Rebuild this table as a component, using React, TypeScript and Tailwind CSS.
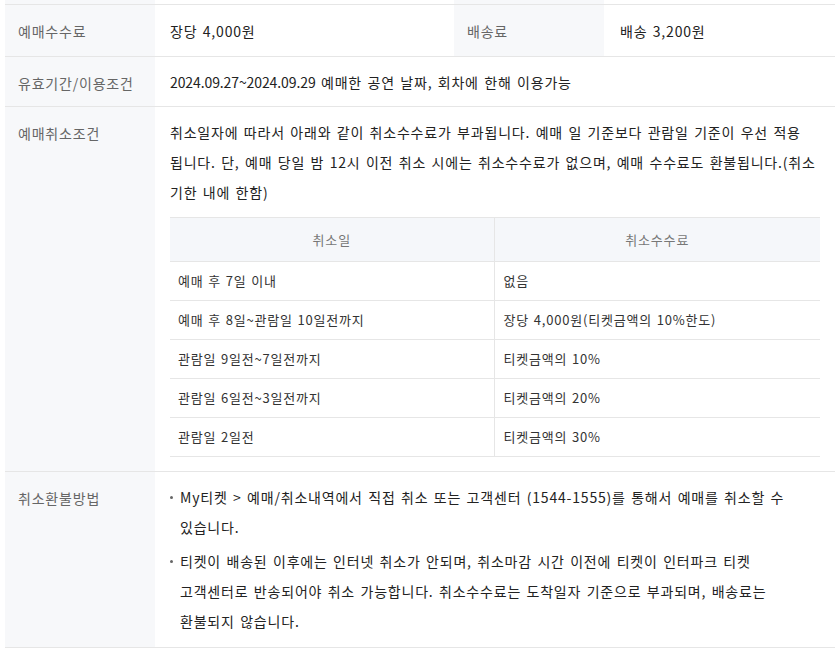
const rows = [
  ["예매 후 7일 이내", "없음"],
  ["예매 후 8일~관람일 10일전까지", "장당 4,000원(티켓금액의 10%한도)"],
  ["관람일 9일전~7일전까지", "티켓금액의 10%"],
  ["관람일 6일전~3일전까지", "티켓금액의 20%"],
  ["관람일 2일전", "티켓금액의 30%"],
];

function Label({ children }: { children: React.ReactNode }) {
  return (
    <div className="bg-[#f7f8fa] px-[13px] pt-[16px] text-[14px] leading-[20px] tracking-[0.8px] text-[#666]">
      {children}
    </div>
  );
}

export default function App() {
  return (
    <div
      className="min-h-[651px] bg-white text-[#222] break-keep tracking-[0.8px] [word-spacing:1.5px]"
      style={{ fontFamily: '"Noto Sans CJK KR", "Noto Sans", sans-serif' }}
    >
      <div className="ml-[5px] w-[830px]">
        <div className="grid h-[5px] grid-cols-[150px_299px_150px_1fr] border-b border-[#e6e6e6]">
          <div className="bg-[#f7f8fa]" />
          <div />
          <div className="bg-[#f7f8fa]" />
          <div />
        </div>

        <div className="grid h-[52px] grid-cols-[150px_299px_150px_1fr] border-b border-[#e6e6e6]">
          <Label>예매수수료</Label>
          <div className="px-[15px] pt-[16px] text-[14px] leading-[20px]">장당 4,000원</div>
          <Label>배송료</Label>
          <div className="px-[16px] pt-[16px] text-[14px] leading-[20px]">배송 3,200원</div>
        </div>

        <div className="grid h-[50px] grid-cols-[150px_1fr] border-b border-[#e6e6e6]">
          <Label>유효기간/이용조건</Label>
          <div className="px-[15px] pt-[15px] text-[14px] leading-[20px]">
            <span className="tracking-[-0.1px]">2024.09.27~2024.09.29</span> 예매한 공연 날짜, 회차에 한해 이용가능
          </div>
        </div>

        <div className="grid grid-cols-[150px_1fr] border-b border-[#e6e6e6]">
          <Label>예매취소조건</Label>
          <div className="px-[15px] pt-[10px] pb-[14px]">
            <p className="text-[14px] leading-[30px]">
              취소일자에 따라서 아래와 같이 취소수수료가 부과됩니다. 예매 일 기준보다 관람일 기준이 우선 적용
              됩니다. 단, 예매 당일 밤 12시 이전 취소 시에는 취소수수료가 없으며, 예매 수수료도 환불됩니다.(취소
              기한 내에 한함)
            </p>
            <table className="mt-[10px] w-full border-collapse text-[13px] tracking-[0.8px] text-[#333] [word-spacing:1px]">
              <thead>
                <tr className="h-[44px] bg-[#f5f7fa] text-[#777]">
                  <th className="w-[324px] border-y border-r border-[#e6e6e6] font-normal">취소일</th>
                  <th className="border-y border-[#e6e6e6] font-normal">취소수수료</th>
                </tr>
              </thead>
              <tbody>
                {rows.map(([a, b]) => (
                  <tr key={a} className="h-[39px] border-b border-[#e6e6e6]">
                    <td className="border-r border-[#e6e6e6] pl-[8px]">{a}</td>
                    <td className="pl-[9px]">{b}</td>
                  </tr>
                ))}
              </tbody>
            </table>
          </div>
        </div>

        <div className="grid grid-cols-[150px_1fr] border-b border-[#e6e6e6]">
          <Label>취소환불방법</Label>
          <ul className="flex flex-col gap-[4px] pt-[10px] pr-[15px] pb-[11px] pl-[15px] text-[14px] leading-[30px]">
            <li className="relative pl-[10px]">
              <span className="absolute left-0 top-[14px] h-[3px] w-[3px] rounded-full bg-[#666]" />
              My티켓 &gt; 예매/취소내역에서 직접 취소 또는 고객센터 (1544-1555)를 통해서 예매를 취소할 수 있습니다.
            </li>
            <li className="relative pl-[10px]">
              <span className="absolute left-0 top-[14px] h-[3px] w-[3px] rounded-full bg-[#666]" />
              티켓이 배송된 이후에는 인터넷 취소가 안되며, 취소마감 시간 이전에 티켓이 인터파크 티켓
              고객센터로 반송되어야 취소 가능합니다. 취소수수료는 도착일자 기준으로 부과되며, 배송료는
              환불되지 않습니다.
            </li>
          </ul>
        </div>
      </div>
    </div>
  );
}
